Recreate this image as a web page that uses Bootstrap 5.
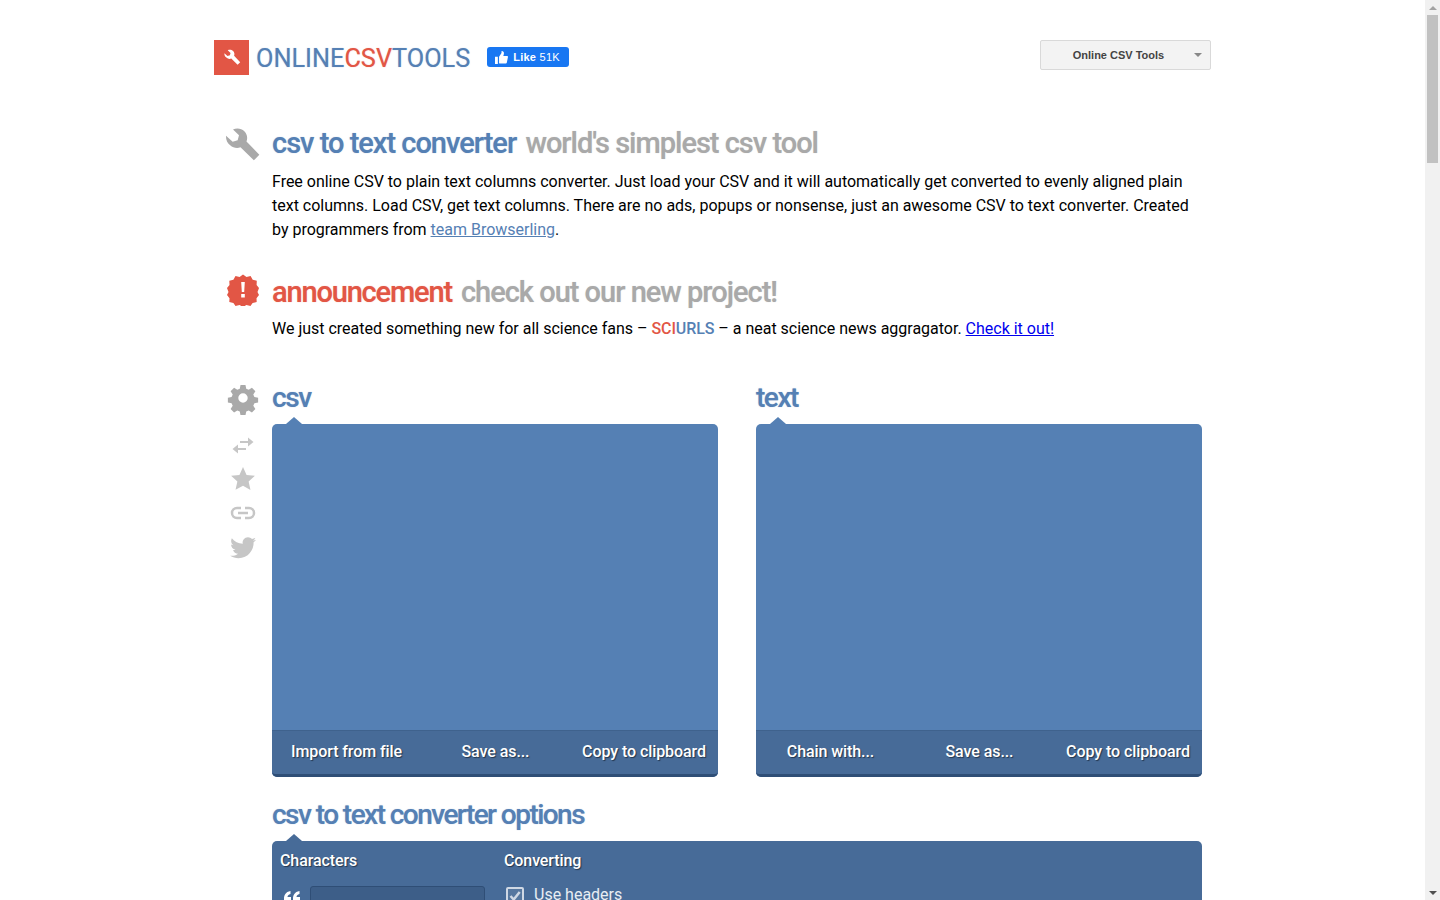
<!DOCTYPE html>
<html lang="en"><head><meta charset="utf-8"><title>csv to text converter</title>
<link href="https://cdn.jsdelivr.net/npm/bootstrap@5.3.0/dist/css/bootstrap.min.css" rel="stylesheet">
<style>
html,body{height:900px;overflow:hidden;margin:0;background:#fff}
body{font-family:Roboto,sans-serif;font-size:16px;line-height:24px;color:#000}
.shell{height:900px}
.pagearea{width:1425px;height:900px;overflow:hidden;flex:none}
.sbar{width:15px;height:900px;background:#f1f1f1;flex:none}
.sbar-up,.sbar-down{height:15px;display:flex;align-items:center;justify-content:center}
.sbar-up i{width:0;height:0;border:4px solid transparent;border-top:0;border-bottom:4px solid #a3a3a3}
.sbar-down i{width:0;height:0;border:4px solid transparent;border-bottom:0;border-top:4px solid #505050}
.sbar-thumb{height:148px;background:#c1c1c1;flex:none;width:11px;margin:0 2px}
.sbar-gap{flex:1}
.sitewrap{width:997px;margin-left:214px;padding-top:40px}
.topbar{height:35px}
.logomark{width:35px;height:35px;background:#e25645}
.logotext{font-size:25.3px;line-height:35px;color:#5580b4;margin-left:7px;padding-top:1px;text-shadow:0 0 1px rgba(85,128,180,.55)}
.logotext b{font-weight:400;color:#e25645;text-shadow:0 0 1px rgba(226,86,69,.55)}
.fblike{background:#1877f2;color:#fff;height:20px;width:82px;border-radius:3px;font:bold 11px/20px "Liberation Sans",sans-serif;margin-left:17px;margin-top:7px;padding-left:8px;gap:5px;letter-spacing:.25px}
.fblike span span{font-weight:400}
.csvmenu{width:171px;height:30px;border:1px solid #d9d9d9;border-radius:2px;background:#f3f3f3;font:bold 11px/28px "Liberation Sans",sans-serif;color:#444;position:relative;text-align:center;padding-right:14px}
.csvmenu i{position:absolute;right:8px;top:12px;border:4px solid transparent;border-top:4px solid #888;border-bottom:0}
.iconcol{width:58px;flex:none}
.iconcol-wrench{margin-left:-1px;width:59px}
.bodycol{width:930px}
.intro{margin-top:50px}
.ttl{font-size:29px;line-height:36px;font-weight:500;letter-spacing:-1px;color:#5580b4;margin:0;text-shadow:0 0 1px rgba(85,128,180,.55)}
.ttl.red{color:#e25645;letter-spacing:-1.17px;text-shadow:0 0 1px rgba(226,86,69,.55)}
.ttl em{font-style:normal;color:#a9a9a9;margin-left:3px;letter-spacing:-1px;text-shadow:0 0 1px rgba(169,169,169,.55)}
.copytext{margin:9px 0 0;letter-spacing:-.01px}
.copytext a.teamlink{color:#5580b4}
.copytext a.outlink{color:#00e}
.notice{margin-top:32px}
.sci1{color:#e25645;font-weight:500;letter-spacing:-.1px}.sci2{color:#5580b4;font-weight:500;letter-spacing:-.1px}
.tools{margin-top:39px}
.panelgrid{gap:38px}
.pane{width:446px}
.panehead{font-size:28px;line-height:35px;font-weight:500;color:#5580b4;letter-spacing:-1.45px;height:44px;margin:0;text-shadow:0 0 1px rgba(85,128,180,.55)}
.paper{height:353px;background:#5580b4;border-radius:5px;position:relative;display:flex;flex-direction:column}
.nub{position:absolute;left:14px;top:-7px;width:0;height:0;border:8px solid transparent;border-top:0;border-bottom:7px solid #5580b4}
.paperfill{flex:1}
.paperfoot{height:47px;background:#476b98;border-top:1px solid #3f628d;border-bottom:3px solid #2f4e76;border-radius:0 0 5px 5px;color:#fff;font-weight:500;letter-spacing:-.08px;text-shadow:1px 1px 1px rgba(0,0,0,.5);line-height:41px}
.cell1,.cell2{width:149px;text-align:center}.cell3{width:148px;text-align:center}
.opthead{font-size:28px;line-height:36px;font-weight:500;color:#5580b4;letter-spacing:-1.55px;margin:20px 0 0;text-shadow:0 0 1px rgba(85,128,180,.55)}
.optpanel{margin-top:8px;height:200px;background:#476b98;border-radius:5px 5px 0 0;position:relative;padding:8px 8px;color:#fff}
.optpanel .nub{border-bottom-color:#476b98}
.optleft{width:224px}
.opthd{font-weight:500;letter-spacing:-.1px;text-shadow:1px 1px 1px rgba(0,0,0,.5)}
.quotemark{width:30px;padding:5px 0 0 4px}
.quotemark svg{display:block}
.inbox{width:175px;height:30px;background:#3d5e88;border:1px solid #2f4e76;border-radius:3px}
.leftrow{margin-top:13px}
.rightrow{margin-top:10px}
.chk{width:18px;height:18px;margin-left:2px;margin-top:4px;background:#56779f;border:2px solid #cfd8e4;border-radius:2px}
.usehd{color:#e8edf3;margin-left:10px}
</style></head><body>
<div class="d-flex shell">
<div class="pagearea">
 <div class="sitewrap">
  <div class="d-flex topbar">
   <div class="logomark d-flex align-items-center justify-content-center">
    <svg width="19" height="19" viewBox="0 0 24 24"><path fill="#fff" d="M3 6.500 7 10l3-.8.8-3L7.200 2.700C9.500 1.600 12.300 2 14 3.800c1.700 1.700 2.100 4 1.300 6.100l7.700 8-3.300 3.300-8-7.800c-2.100.8-4.500.3-6.200-1.300C3.700 10.900 2.900 8.600 3 6.500Z"/></svg>
   </div>
   <div class="logotext">ONLINE<b>CSV</b>TOOLS</div>
   <div class="fblike d-flex align-items-center">
    <svg width="13" height="13" viewBox="0 0 16 16"><path fill="#fff" d="M0 7h3.500v9H0zM5 15.500V7l3-4.500V.5c0-.3.200-.5.500-.5 1.500 0 2.500 1.200 2.500 2.700 0 1-.3 2-.8 3.300H15c.6 0 1 .5 1 1l-1.500 7.500c-.1.600-.6 1-1.200 1H6.500c-.6 0-1.100-.2-1.500-.5Z"/></svg>
    <span>Like <span>51K</span></span>
   </div>
   <div class="csvmenu ms-auto">Online CSV Tools<i></i></div>
  </div>

  <div class="d-flex intro">
   <div class="iconcol iconcol-wrench">
    <svg class="ms-2" width="40" height="40" viewBox="0 0 24 24"><path fill="#a9a9a9" d="M3 6.500 7 10l3-.8.8-3L7.200 2.700C9.500 1.600 12.300 2 14 3.800c1.700 1.700 2.100 4 1.300 6.100l7.700 8-3.300 3.300-8-7.800c-2.100.8-4.500.3-6.200-1.300C3.700 10.900 2.900 8.600 3 6.500Z"/></svg>
   </div>
   <div class="bodycol">
    <h1 class="ttl">csv to text converter <em>world's simplest csv tool</em></h1>
    <p class="copytext">Free online CSV to plain text columns converter. Just load your CSV and it will automatically get converted to evenly aligned plain text columns. Load CSV, get text columns. There are no ads, popups or nonsense, just an awesome CSV to text converter. Created by programmers from <a class="teamlink" href="#">team Browserling</a>.</p>
   </div>
  </div>

  <div class="d-flex notice">
   <div class="iconcol d-flex justify-content-center">
    <svg width="32" height="32" viewBox="0 0 32 32"><path fill="#e25645" d="M16 .5 19.500 3l4.100-1 2.100 3.700 4.100 1-.2 4.200L32 14l-1.500 4 1.500 3-2.500 3.300.2 3.800-4.100 1-2.100 2.900-4.100-1-3.400 2-3.400-2-4.100 1-2.100-2.900-4.100-1 .2-3.800L0 21l1.500-3L0 14l2.500-3.100-.2-4.200 4.100-1L8.500 2l4.100 1Z"/><path fill="#fff" d="M14.200 8h3.600l-.6 10h-2.400zM14.200 20h3.600v3.500h-3.600z"/></svg>
   </div>
   <div class="bodycol">
    <h2 class="ttl red">announcement <em>check out our new project!</em></h2>
    <p class="copytext" style="margin-top:7px">We just created something new for all science fans – <span class="sci1">SCI</span><span class="sci2">URLS</span> – a neat science news aggragator. <a class="outlink" href="#">Check it out!</a></p>
   </div>
  </div>

  <div class="d-flex tools">
   <div class="iconcol d-flex flex-column align-items-center">
    <svg style="margin-top:1px" width="34" height="34" viewBox="0 0 24 24"><path fill="#a9a9a9" fill-rule="evenodd" d="M10 1.500h4l.6 3 2 .9 2.600-1.700 2.800 2.800-1.700 2.600.9 2 3 .6v4l-3 .6-.9 2 1.700 2.600-2.800 2.800-2.600-1.700-2 .9-.6 3h-4l-.6-3-2-.9-2.600 1.700-2.800-2.800 1.700-2.600-.9-2-3-.6v-4l3-.6.9-2-1.700-2.600 2.800-2.800 2.600 1.700 2-.9ZM12 8.200a3.800 3.800 0 1 0 0 7.600 3.800 3.800 0 0 0 0-7.600Z" transform="translate(1.500 1.500) scale(.875)"/></svg>
    <svg style="margin-top:21px" width="24" height="18" viewBox="0 0 24 18"><path fill="#c6c6c6" d="M9 5h8V1.500L22.500 6 17 10.500V7H9zM15 14H7v3.500L1.500 13 7 8.500V12h8z"/></svg>
    <svg style="margin-top:12px" width="26" height="26" viewBox="0 0 24 24"><path fill="#c6c6c6" d="m12 1 3.300 7.300 7.700.8-5.800 5.300 1.700 7.800L12 18.200 5.100 22l1.700-7.800L1 9.100l7.700-.8Z"/></svg>
    <svg style="margin-top:14px" width="26" height="14" viewBox="0 0 26 14"><path fill="none" stroke="#c6c6c6" stroke-width="2.500" d="M11 2H7a5 5 0 0 0 0 10h4M15 2h4a5 5 0 0 1 0 10h-4M8 7h10"/></svg>
    <svg style="margin-top:17px" width="26" height="22" viewBox="0 0 24 20"><path fill="#c6c6c6" d="M24 2.400c-.9.400-1.800.7-2.800.8 1-.6 1.800-1.600 2.200-2.700-1 .6-2 1-3.100 1.200C19.300.7 18 0 16.600 0c-3.200 0-5.500 3-4.800 6C7.700 5.800 4.100 3.900 1.700.9.400 3.100 1 6 3.200 7.400c-.8 0-1.600-.2-2.200-.6 0 2.300 1.600 4.400 4 4.900-.7.200-1.500.2-2.200.1.600 2 2.500 3.400 4.600 3.400-2 1.600-4.600 2.300-7.200 2 2.200 1.400 4.800 2.200 7.600 2.200 9.100 0 14.300-7.700 14-14.700 1-.7 1.800-1.500 2.200-2.300Z"/></svg>
   </div>
   <div class="bodycol">
    <div class="d-flex panelgrid">
     <div class="pane">
      <h3 class="panehead">csv</h3>
      <div class="paper"><span class="nub"></span><div class="paperfill"></div>
       <div class="paperfoot d-flex"><div class="cell1">Import from file</div><div class="cell2">Save as...</div><div class="cell3">Copy to clipboard</div></div></div>
     </div>
     <div class="pane">
      <h3 class="panehead">text</h3>
      <div class="paper"><span class="nub"></span><div class="paperfill"></div>
       <div class="paperfoot d-flex"><div class="cell1">Chain with...</div><div class="cell2">Save as...</div><div class="cell3">Copy to clipboard</div></div></div>
     </div>
    </div>
    <h3 class="opthead">csv to text converter options</h3>
    <div class="optpanel"><span class="nub"></span>
     <div class="d-flex">
      <div class="optleft"><div class="opthd">Characters</div>
       <div class="d-flex leftrow"><div class="quotemark"><svg width="16" height="14" viewBox="0 0 16 14"><path fill="#fff" d="M0 14V8c0-4 1.500-7 6.500-8v3C4.500 3.500 3.500 4.500 3.500 6H7v8zM9 14V8c0-4 1.500-7 6.500-8v3c-2 .5-3 1.500-3 3H16v8z"/></svg></div><div class="inbox"></div></div></div>
      <div><div class="opthd">Converting</div>
       <div class="d-flex rightrow align-items-start"><div class="chk d-flex align-items-center justify-content-center"><svg width="12" height="12" viewBox="0 0 12 12"><path fill="none" stroke="#cfd8e4" stroke-width="2.500" d="m1.500 6 3.200 3.500 6-7.500"/></svg></div><div class="usehd">Use headers</div></div></div>
     </div>
    </div>
   </div>
  </div>
 </div>
</div>
<aside class="sbar d-flex flex-column"><div class="sbar-up"><i></i></div><div class="sbar-thumb"></div><div class="sbar-gap"></div><div class="sbar-down"><i></i></div></aside>
</div>
<script src="https://cdn.jsdelivr.net/npm/bootstrap@5.3.0/dist/js/bootstrap.bundle.min.js"></script>
</body></html>
